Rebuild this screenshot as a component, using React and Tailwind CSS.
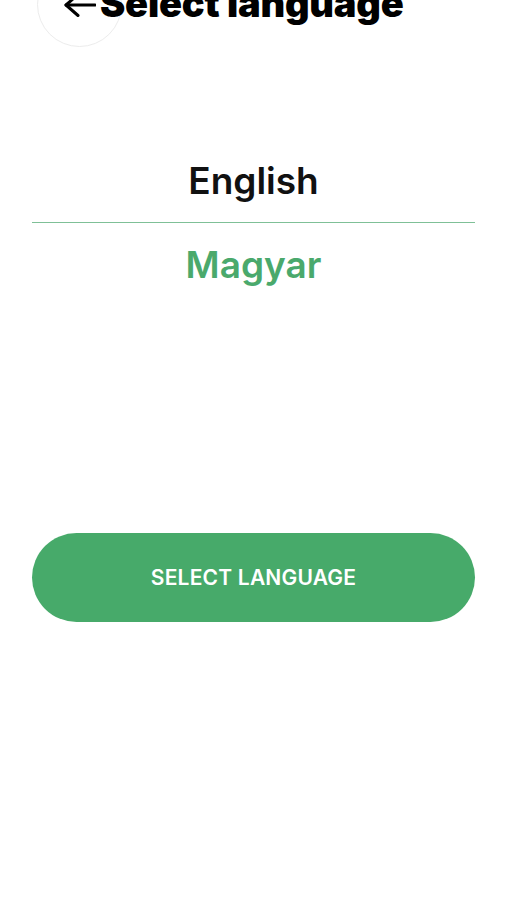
const languages = [
    { name: 'English', selected: false },
    { name: 'Magyar', selected: true },
];

const BackArrow = () => (
    <svg width="32" height="24" viewBox="0 0 32 24" fill="none" stroke="currentColor" strokeWidth="3" strokeLinecap="round" strokeLinejoin="round">
        <path d="M31 12H2" />
        <path d="M14 1.5L2 12l12 10.5" />
    </svg>
);

const App = () => {
    return (
        <div className="min-h-[900px] bg-white overflow-hidden font-['Inter',sans-serif]">
            <header className="flex items-start h-[47px]">
                <button className="ml-[37px] -mt-[38px] w-[85px] h-[85px] shrink-0 rounded-full border border-[#ececec] flex items-center justify-center text-black">
                    <BackArrow />
                </button>
                <h1 className="-ml-[22px] -mt-[16px] text-[38px] leading-none font-black tracking-[-0.2px] text-black whitespace-nowrap">
                    Select language
                </h1>
            </header>

            <ul className="mt-[112px] mx-[32px]">
                {languages.map((lang, i) => (
                    <li
                        key={lang.name}
                        className={
                            i < languages.length - 1
                                ? 'border-b border-[#7fc097] pb-[19px] mb-[20px]'
                                : ''
                        }
                    >
                        <div
                            className={
                                lang.selected
                                    ? 'text-center text-[37px] leading-[44px] font-semibold text-[#4aa96c]'
                                    : 'text-center text-[37px] leading-[44px] font-semibold text-[#111]'
                            }
                        >
                            {lang.name}
                        </div>
                    </li>
                ))}
            </ul>

            <div className="mx-[32px] mt-[246px]">
                <button className="w-full h-[89px] rounded-full bg-[#47aa6a] text-white text-[21px] font-semibold tracking-[0.2px]">
                    SELECT LANGUAGE
                </button>
            </div>
        </div>
    );
};

export default App;
